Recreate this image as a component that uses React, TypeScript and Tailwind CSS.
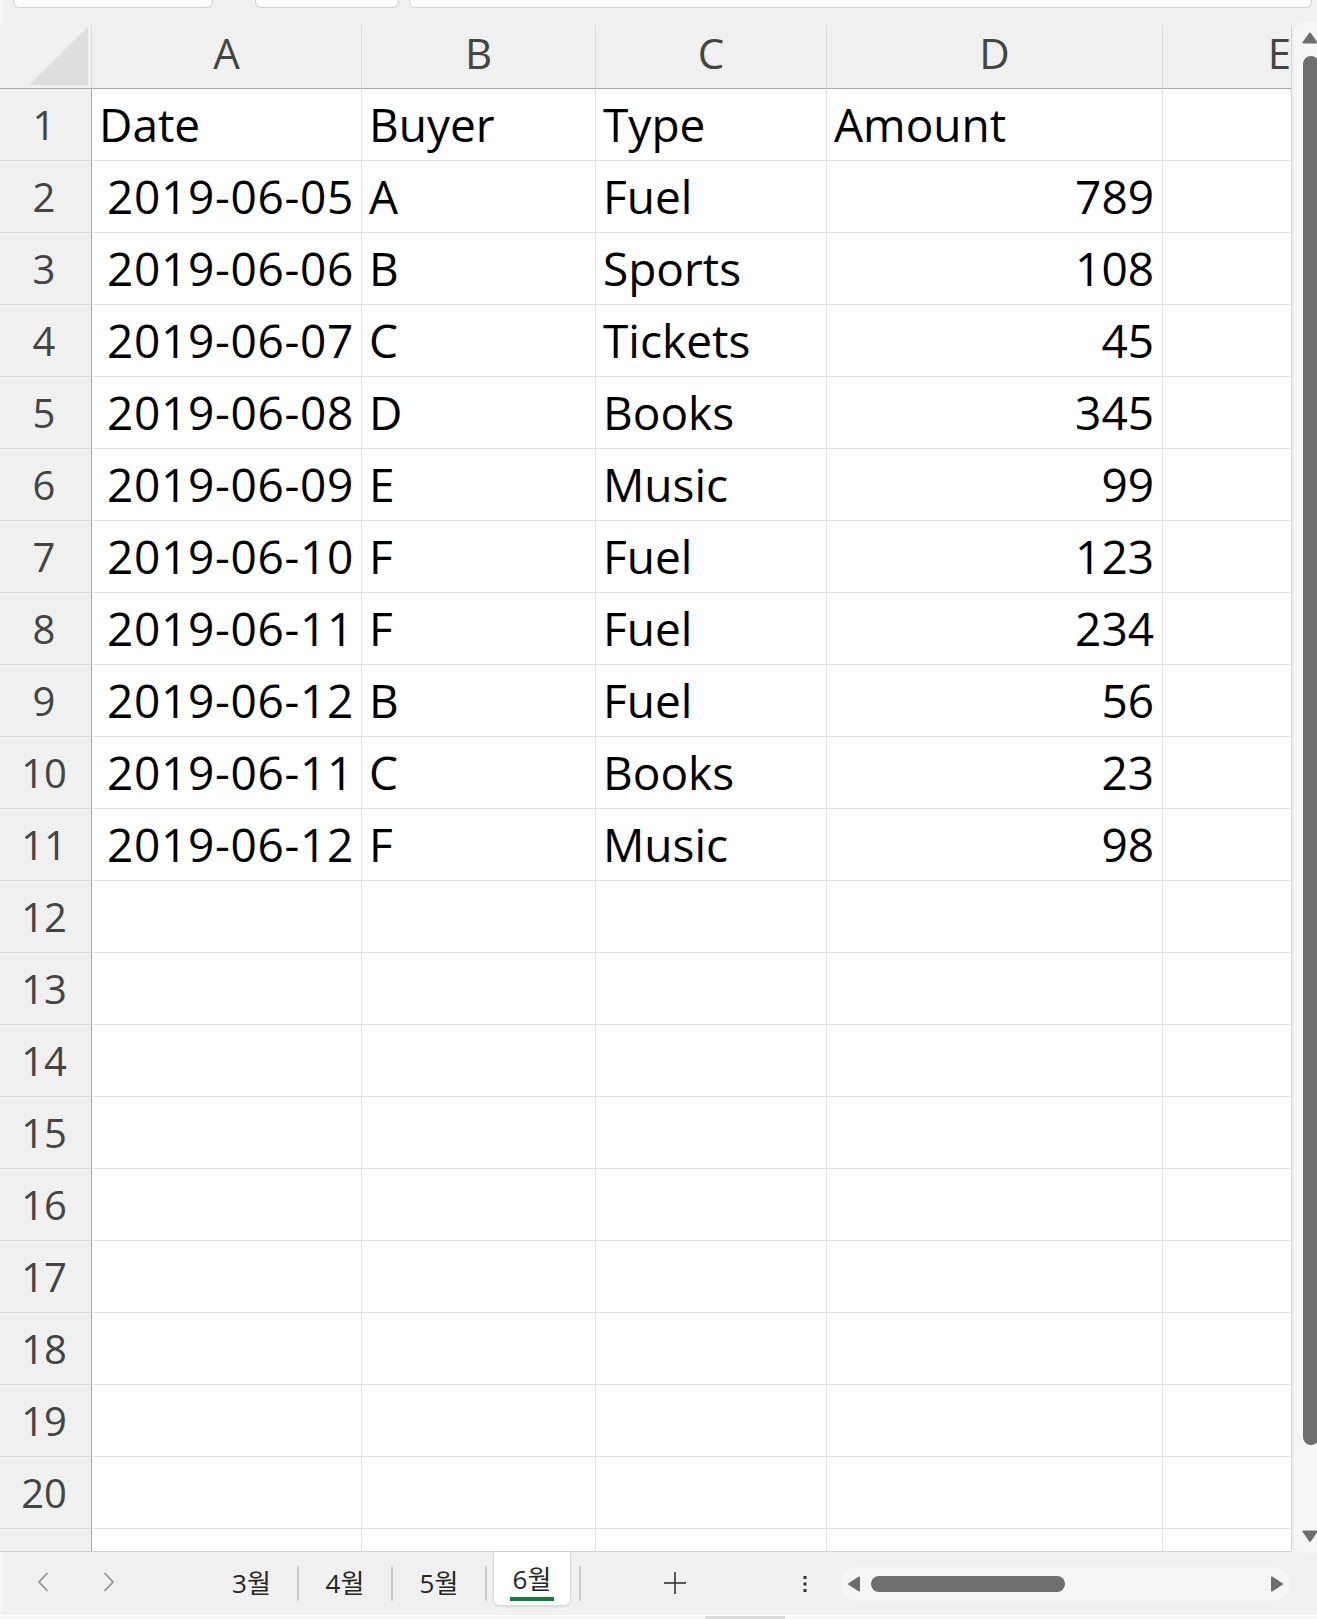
import React from 'react';

const COLS = ['w-[270px]', 'w-[234px]', 'w-[231px]', 'w-[336px]', 'w-[234px]'];
const LETTERS = ['A', 'B', 'C', 'D', 'E'];

type Row = [string, string, string, string];
const DATA: Row[] = [
  ['2019-06-05', 'A', 'Fuel', '789'],
  ['2019-06-06', 'B', 'Sports', '108'],
  ['2019-06-07', 'C', 'Tickets', '45'],
  ['2019-06-08', 'D', 'Books', '345'],
  ['2019-06-09', 'E', 'Music', '99'],
  ['2019-06-10', 'F', 'Fuel', '123'],
  ['2019-06-11', 'F', 'Fuel', '234'],
  ['2019-06-12', 'B', 'Fuel', '56'],
  ['2019-06-11', 'C', 'Books', '23'],
  ['2019-06-12', 'F', 'Music', '98'],
];

type CellDef = { text: string; right?: boolean; date?: boolean };

function buildRows(): CellDef[][] {
  const rows: CellDef[][] = [];
  rows.push([{ text: 'Date' }, { text: 'Buyer' }, { text: 'Type' }, { text: 'Amount' }, { text: '' }]);
  for (const r of DATA) {
    rows.push([
      { text: r[0], right: true, date: true },
      { text: r[1] },
      { text: r[2] },
      { text: r[3], right: true },
      { text: '' },
    ]);
  }
  while (rows.length < 20) rows.push([{ text: '' }, { text: '' }, { text: '' }, { text: '' }, { text: '' }]);
  return rows;
}

function DataRow({ n, cells }: { n: number; cells: CellDef[] }) {
  return (
    <div className="flex h-[72px] shrink-0">
      <div className="w-[92px] shrink-0 h-full border-r border-r-[#a9a9a9] border-b border-b-[#dcdcdc] bg-[#f0f0f0] flex items-center justify-center pr-[3px] text-[40px] text-[#444444] leading-none">
        {n}
      </div>
      {cells.map((c, i) => (
        <div
          key={i}
          className={
            COLS[i] +
            ' shrink-0 h-full border-r border-b border-[#e1e1e1] bg-white flex items-center overflow-hidden whitespace-nowrap text-[46px] text-black ' +
            (c.date ? 'justify-end pr-[7px] tracking-[0.7px]' : c.right ? 'justify-end pr-[8px]' : 'justify-start pl-[7px]')
          }
        >
          {c.text}
        </div>
      ))}
    </div>
  );
}

function Chevron({ dir }: { dir: 'l' | 'r' }) {
  return (
    <svg width="12" height="20" viewBox="0 0 12 20" className="shrink-0">
      <polyline
        points={dir === 'l' ? '10.5,1 2,10 10.5,19' : '1.5,1 10,10 1.5,19'}
        fill="none"
        stroke="#8a8a8a"
        strokeWidth="1.6"
        strokeLinejoin="round"
      />
    </svg>
  );
}

function Sep() {
  return <div className="w-[2px] h-[35px] bg-[#c9c9c9] rounded-[1px] shrink-0" />;
}

function TabLabel({ text }: { text: string }) {
  return (
    <div className="flex items-center justify-center text-[26px] text-[#262626] leading-none pb-[2px]">{text}</div>
  );
}

export default function App() {
  const rows = buildRows();
  return (
    <div className="w-[1317px] h-[1619px] bg-[#f0f0f0] overflow-hidden font-['Open_Sans','Noto_Sans_CJK_KR',sans-serif] flex flex-col">
      {/* top strip */}
      <div className="h-[25px] shrink-0 flex items-start border-l-[3px] border-l-[#f6f6f6]">
        <div className="ml-[10px] w-[200px] h-[8px] bg-white border border-t-0 border-[#d2d2d2] rounded-b-[6px]" />
        <div className="ml-[42px] w-[144px] h-[8px] bg-white border border-t-0 border-[#d2d2d2] rounded-b-[6px]" />
        <div className="ml-[10px] w-[903px] h-[8px] bg-white border border-t-0 border-[#d2d2d2] rounded-b-[6px]" />
      </div>

      {/* main */}
      <div className="flex h-[1527px] shrink-0">
        <div className="w-[1292px] shrink-0 h-full border-r border-r-[#d6d6d6] border-b border-b-[#cfcfcf] overflow-hidden flex flex-col">
          {/* column header */}
          <div className="flex h-[64px] shrink-0">
            <div className="w-[92px] shrink-0 h-full border-r border-r-[#dcdcdc] border-b border-b-[#a9a9a9] bg-[#f0f0f0]">
              <svg width="91" height="63" viewBox="0 0 91 63">
                <polygon points="88,2 88,60 29,60" fill="#dedede" />
              </svg>
            </div>
            {LETTERS.map((l, i) => (
              <div
                key={l}
                className={
                  COLS[i] +
                  ' shrink-0 h-full border-r border-r-[#dcdcdc] border-b border-b-[#a9a9a9] bg-[#f0f0f0] flex items-center justify-center pb-[8px] text-[42px] text-[#444444] leading-none'
                }
              >
                {l}
              </div>
            ))}
          </div>
          {rows.map((cells, i) => (
            <DataRow key={i} n={i + 1} cells={cells} />
          ))}
          {/* partial row 21 */}
          <div className="flex h-[22px] shrink-0">
            <div className="w-[92px] shrink-0 h-full border-r border-r-[#a9a9a9] bg-[#f0f0f0]" />
            {COLS.map((w, i) => (
              <div key={i} className={w + ' shrink-0 h-full border-r border-[#e1e1e1] bg-white'} />
            ))}
          </div>
        </div>

        {/* vertical scrollbar */}
        <div className="w-[25px] shrink-0 h-full pl-[2px] overflow-visible">
          <div className="-mt-[3px] w-[30px] h-[1531px] bg-[#f6f6f6] rounded-l-[10px] flex flex-col">
            <svg width="16" height="12" viewBox="0 0 16 12" className="mt-[10px] ml-[8px] shrink-0">
              <polygon points="8,1.5 14.5,10.5 1.5,10.5" fill="#6e6e6e" stroke="#6e6e6e" strokeWidth="2" strokeLinejoin="round" />
            </svg>
            <div className="mt-[12px] ml-[9px] w-[16px] h-[1389px] bg-[#6e6e6e] rounded-full shrink-0" />
            <svg width="16" height="13" viewBox="0 0 16 13" className="mt-[85px] ml-[8px] shrink-0">
              <polygon points="1.5,1.5 14.5,1.5 8,11" fill="#6e6e6e" stroke="#6e6e6e" strokeWidth="2" strokeLinejoin="round" />
            </svg>
          </div>
        </div>
      </div>

      {/* sheet tab bar */}
      <div className="h-[63px] shrink-0 flex items-center border-l-[3px] border-l-[#f6f6f6]">
        <div className="w-[203px] shrink-0 flex items-center pl-[34px] -mt-[3px]">
          <Chevron dir="l" />
          <div className="w-[54px]" />
          <Chevron dir="r" />
        </div>
        <div className="w-[91px] shrink-0 flex justify-center">
          <TabLabel text="3월" />
        </div>
        <Sep />
        <div className="w-[92px] shrink-0 flex justify-center">
          <TabLabel text="4월" />
        </div>
        <Sep />
        <div className="w-[92px] shrink-0 flex justify-center">
          <TabLabel text="5월" />
        </div>
        <Sep />
        <div className="ml-[6px] w-[78px] h-[54px] self-start shrink-0 bg-white border-x border-b border-[#dadada] rounded-b-[7px] shadow-[0_1px_2px_rgba(0,0,0,0.08)] flex flex-col items-center">
          <div className="mt-[14px] text-[26px] text-[#262626] leading-none h-[26px] flex items-center">6월</div>
          <div className="mt-[5px] w-[44px] h-[4px] bg-[#107c41]" />
        </div>
        <div className="ml-[8px]">
          <Sep />
        </div>
        <svg width="24" height="24" viewBox="0 0 24 24" className="ml-[82px] shrink-0 -mt-[2px]">
          <line x1="12" y1="1" x2="12" y2="23" stroke="#333" strokeWidth="1.6" />
          <line x1="1" y1="12" x2="23" y2="12" stroke="#333" strokeWidth="1.6" />
        </svg>
        <svg width="4" height="16" viewBox="0 0 4 16" className="ml-[116px] shrink-0">
          <rect x="0.5" y="0" width="3" height="3" fill="#333" />
          <rect x="0.5" y="6.5" width="3" height="3" fill="#333" />
          <rect x="0.5" y="13" width="3" height="3" fill="#333" />
        </svg>
        <div className="ml-[34px] w-[449px] h-[34px] shrink-0 bg-[#f6f6f6] rounded-full flex items-center">
          <svg width="14" height="16" viewBox="0 0 14 16" className="ml-[6px] shrink-0">
            <polygon points="2,8 12,1.5 12,14.5" fill="#6e6e6e" stroke="#6e6e6e" strokeWidth="2" strokeLinejoin="round" />
          </svg>
          <div className="ml-[10px] w-[194px] h-[16px] bg-[#6e6e6e] rounded-full shrink-0" />
          <svg width="14" height="16" viewBox="0 0 14 16" className="ml-auto mr-[6px] shrink-0">
            <polygon points="2,1.5 12,8 2,14.5" fill="#6e6e6e" stroke="#6e6e6e" strokeWidth="2" strokeLinejoin="round" />
          </svg>
        </div>
      </div>

      {/* bottom strip */}
      <div className="h-[4px] shrink-0 bg-[#f8f8f8] border-t border-white">
        <div className="ml-[705px] w-[80px] h-[3px] bg-[#dcdcdc]" />
      </div>
    </div>
  );
}
